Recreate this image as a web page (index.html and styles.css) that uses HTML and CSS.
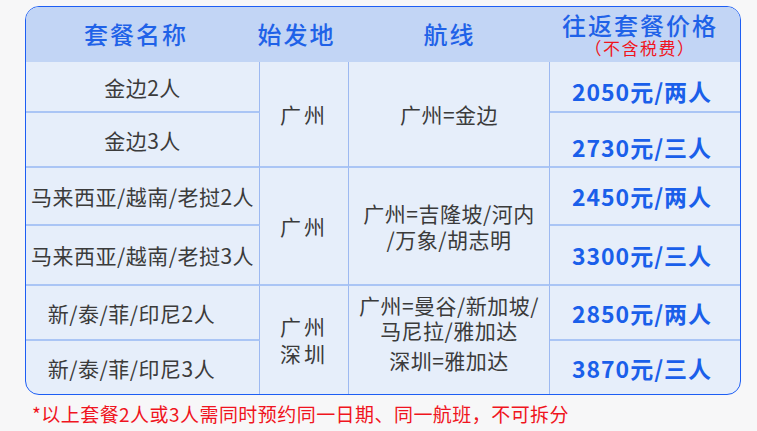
FILE: index.html
```html
<!DOCTYPE html>
<html lang="zh-CN">
<head>
<meta charset="utf-8">
<link rel="stylesheet" href="styles.css">
</head>
<body>
<div class="page">
  <div class="table">
    <div class="th th-name">套餐名称</div>
    <div class="th th-from">始发地</div>
    <div class="th th-route">航线</div>
    <div class="th th-price"><span class="price-title">往返套餐价格</span><span class="tax">（不含税费）</span></div>

    <div class="td name r1 hline">金边2人</div>
    <div class="td name r2 hline">金边3人</div>
    <div class="td name r3 hline">马来西亚/越南/老挝2人</div>
    <div class="td name r4 hline">马来西亚/越南/老挝3人</div>
    <div class="td name r5 hline shift">新/泰/菲/印尼2人</div>
    <div class="td name r6 shift">新/泰/菲/印尼3人</div>

    <div class="td from r12 hline">广州</div>
    <div class="td from r34 hline">广州</div>
    <div class="td from r56">广州<br>深圳</div>

    <div class="td route r12 hline">广州=金边</div>
    <div class="td route r34 hline">广州=吉隆坡/河内<br>/万象/胡志明</div>
    <div class="td route r56 route-multi"><span class="seg">广州=曼谷/新加坡/<br>马尼拉/雅加达</span><span class="seg seg2">深圳=雅加达</span></div>

    <div class="td price r1 hline p1">2050元/两人</div>
    <div class="td price r2 hline p2">2730元/三人</div>
    <div class="td price r3 hline">2450元/两人</div>
    <div class="td price r4 hline">3300元/三人</div>
    <div class="td price r5 hline">2850元/两人</div>
    <div class="td price r6">3870元/三人</div>
  </div>
  <p class="note">*以上套餐2人或3人需同时预约同一日期、同一航班，不可拆分</p>
</div>
</body>
</html>
```

FILE: styles.css
```css
html, body {
  margin: 0;
  padding: 0;
  background: #f7f7f8;
}
body {
  width: 757px;
  height: 431px;
  overflow: hidden;
  font-family: "Noto Sans CJK SC", "Noto Sans", sans-serif;
}
.page {
  padding: 6px 0 0 25px;
}
.table {
  width: 714px;
  border: 1.5px solid #1d5ef4;
  border-radius: 14px;
  overflow: hidden;
  background: #e6eefa;
  display: grid;
  grid-template-columns: 234px 89px 201px 190px;
  grid-template-rows: 55px 51px 55px 58px 60px 55px 53px;
}
.th {
  background: #c2d5f5;
  color: #1f62e8;
  font-size: 24px;
  font-weight: 500;
  letter-spacing: 2px;
  display: flex;
  flex-direction: column;
  align-items: center;
  justify-content: center;
  line-height: 1.1;
  white-space: nowrap;
}
.th-name { padding-right: 14px; }
.th-from { padding-right: 16px; }
.th-price {
  padding-right: 10px;
  justify-content: flex-start;
  padding-top: 4px;
}
.price-title { line-height: 28px; }
.tax {
  color: #f01420;
  font-size: 17px;
  font-weight: 400;
  letter-spacing: 1.5px;
  line-height: 18px;
}
.td {
  display: flex;
  align-items: center;
  justify-content: center;
  text-align: center;
  color: #3b3b3b;
  font-size: 21px;
  letter-spacing: 0.5px;
  line-height: 26px;
}
.hline { border-bottom: 2px solid #aac5f5; }
.name { grid-column: 1; border-right: 1px solid #9db9f1; }
.from {
  grid-column: 2;
  border-right: 1px solid #9db9f1;
  letter-spacing: 3px;
  padding-left: 0;
  line-height: 27px;
}
.route { grid-column: 3; border-right: 1px solid #9db9f1; }
.price {
  grid-column: 4;
  color: #1a5fea;
  font-weight: 700;
  font-size: 23px;
  letter-spacing: 1px;
  padding-right: 6px;
}
.r1 { grid-row: 2; }
.r2 { grid-row: 3; }
.r3 { grid-row: 4; }
.r4 { grid-row: 5; }
.r5 { grid-row: 6; }
.r6 { grid-row: 7; }
.r12 { grid-row: 2 / 4; }
.r34 { grid-row: 4 / 6; }
.r56 { grid-row: 6 / 8; }
.shift { padding-right: 22px; }
.p1 { padding-top: 8px; }
.p2 { padding-top: 14px; }
.route-multi {
  flex-direction: column;
  justify-content: flex-start;
  padding-top: 7px;
}
.seg { display: block; line-height: 25px; }
.seg2 { margin-top: 5px; }
.note {
  margin: 7px 0 0 7px;
  color: #f01420;
  font-size: 19px;
  letter-spacing: 0.45px;
  line-height: 24px;
}
```
